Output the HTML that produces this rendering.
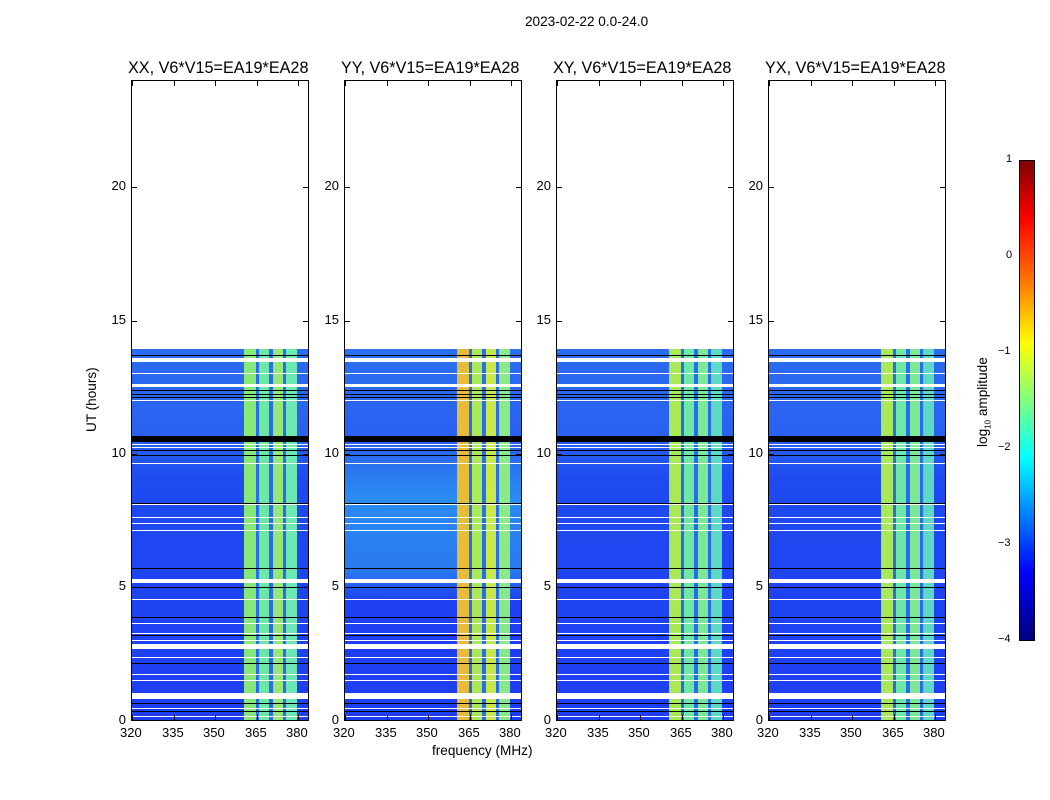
<!DOCTYPE html>
<html><head><style>
body{margin:0;width:1050px;height:800px;background:#fff;position:relative;overflow:hidden;font-family:"Liberation Sans",sans-serif;color:#000}
.t{position:absolute;white-space:nowrap}
.p{position:absolute;top:80px;width:176px;height:639px;border:1px solid #000;box-sizing:content-box;overflow:hidden}
.d{position:absolute;left:0;top:268px;width:176px;height:371px;background:#1e3ef2}
.s{position:absolute;left:0;width:176px}
.tick{position:absolute;background:#000}
.yl{position:absolute;font-size:13px;text-align:right;width:30px}
.xl{position:absolute;font-size:13px;top:725px}
.ti{position:absolute;font-size:16.2px;top:59px;white-space:nowrap}
</style></head><body>
<div class="t" style="left:525px;top:14px;font-size:13.6px">2023-02-22 0.0-24.0</div>
<div class="t" style="left:432px;top:743px;font-size:13.6px">frequency (MHz)</div>
<div class="t" style="left:84px;top:432px;font-size:13.6px;transform:rotate(-90deg);transform-origin:0 0">UT (hours)</div>
<div class="ti" style="left:128px">XX, V6*V15=EA19*EA28</div>
<div class="ti" style="left:341px">YY, V6*V15=EA19*EA28</div>
<div class="ti" style="left:553px">XY, V6*V15=EA19*EA28</div>
<div class="ti" style="left:765px">YX, V6*V15=EA19*EA28</div>
<div id="panels"></div>
<div style="position:absolute;left:1019px;top:160px;width:14px;height:479px;border:1px solid #000;background:linear-gradient(to bottom,#7f0000 0%,#ff0000 12%,#ff7f00 26%,#ffff00 38%,#7fff7f 50%,#00ffff 62%,#007fff 74%,#0000ff 86%,#00007f 100%)"></div>
<div class="t" style="left:1006px;top:153px;font-size:11px">1</div>
<div class="t" style="left:1006px;top:249px;font-size:11px">0</div>
<div class="t" style="left:998px;top:345px;font-size:11px">−1</div>
<div class="t" style="left:998px;top:441px;font-size:11px">−2</div>
<div class="t" style="left:998px;top:537px;font-size:11px">−3</div>
<div class="t" style="left:998px;top:633px;font-size:11px">−4</div>
<div class="t" style="left:975px;top:447px;font-size:13.6px;transform:rotate(-90deg);transform-origin:0 0">log<sub style="font-size:8px">10</sub> amplitude</div>
<script>
var lefts=[131,344,556,768];
var band=[
"linear-gradient(to right,#8cf070 0,#8cf070 12px,#2a6cf0 12px,#2a6cf0 15px,#70f0a0 15px,#70f0a0 25px,#2a6cf0 25px,#2a6cf0 29px,#9cf070 29px,#9cf070 39px,#2a6cf0 39px,#2a6cf0 42px,#70f0b0 42px,#70f0b0 53px)",
"linear-gradient(to right,#f0c030 0,#f0c030 12px,#2a6cf0 12px,#2a6cf0 15px,#b0f050 15px,#b0f050 25px,#2a6cf0 25px,#2a6cf0 29px,#d0f040 29px,#d0f040 39px,#2a6cf0 39px,#2a6cf0 42px,#90f080 42px,#90f080 53px)",
"linear-gradient(to right,#b0f050 0,#b0f050 12px,#2a6cf0 12px,#2a6cf0 15px,#70f0a0 15px,#70f0a0 25px,#2a6cf0 25px,#2a6cf0 29px,#80f090 29px,#80f090 39px,#2a6cf0 39px,#2a6cf0 42px,#60e0c0 42px,#60e0c0 53px)",
"linear-gradient(to right,#b0f050 0,#b0f050 12px,#2a6cf0 12px,#2a6cf0 15px,#70f0a0 15px,#70f0a0 25px,#2a6cf0 25px,#2a6cf0 29px,#80f090 29px,#80f090 39px,#2a6cf0 39px,#2a6cf0 42px,#60e0c0 42px,#60e0c0 53px)"];
var st=[[354,1,'#000'],[357,4,'#fff'],[372,1,'#fff'],[383,3,'#fff'],[389,1,'#000'],[393,1,'#000'],[396,1,'#000'],[399,1,'#fff'],[435,6,'#000'],[443,1,'#fff'],[446,1,'#fff'],[449,1,'#000'],[454,1,'#000'],[462,1,'#fff'],[502,1,'#000'],[503,1,'#fff'],[516,1,'#fff'],[522,1,'#fff'],[529,1,'#fff'],[567,1,'#000'],[578,4,'#fff'],[586,1,'#000'],[598,1,'#fff'],[616,1,'#000'],[622,1,'#fff'],[632,1,'#fff'],[634,1,'#000'],[639,1,'#fff'],[643,5,'#fff'],[656,1,'#fff'],[662,1,'#000'],[673,1,'#fff'],[679,1,'#fff'],[692,6,'#fff'],[702,1,'#000'],[707,1,'#fff'],[710,1,'#000'],[715,1,'#fff']];
var h='';
lefts.forEach(function(L,i){
 h+='<div class="p" style="left:'+L+'px;top:80px">';
 var bg=i==1?'linear-gradient(to bottom,#2a70f0 0,#2a60f0 25%,#2a8cf0 40%,#2a78f0 60%,#1e40f0 68%,#1e3ef2 100%)':'linear-gradient(to bottom,#2a6cf0 0,#2a60f0 25%,#1e4af0 35%,#1e3ef2 100%)';
 h+='<div class="d" style="background:'+bg+'"></div>';
 h+='<div class="d" style="left:112px;width:53px;background:'+band[i]+';opacity:.95"></div>';
 st.forEach(function(s){h+='<div class="s" style="top:'+(s[0]-80)+'px;height:'+s[1]+'px;background:'+s[2]+'"></div>';});
 [0,5,10,15,20].forEach(function(v){var y=639-v*26.63;h+='<div class="tick" style="left:0;top:'+y+'px;width:5px;height:1px"></div><div class="tick" style="right:0;top:'+y+'px;width:5px;height:1px"></div>';});
 [0,42,83,125,166].forEach(function(x){h+='<div class="tick" style="left:'+x+'px;bottom:0;width:1px;height:5px"></div><div class="tick" style="left:'+x+'px;top:0;width:1px;height:5px"></div>';});
 h+='</div>';
});
document.getElementById('panels').innerHTML=h;
</script>
<div class="yl" style="left:96px;top:712px">0</div><div class="yl" style="left:96px;top:578px">5</div><div class="yl" style="left:96px;top:445px">10</div><div class="yl" style="left:96px;top:312px">15</div><div class="yl" style="left:96px;top:178px">20</div>
<div class="yl" style="left:309px;top:712px">0</div><div class="yl" style="left:309px;top:578px">5</div><div class="yl" style="left:309px;top:445px">10</div><div class="yl" style="left:309px;top:312px">15</div><div class="yl" style="left:309px;top:178px">20</div>
<div class="yl" style="left:521px;top:712px">0</div><div class="yl" style="left:521px;top:578px">5</div><div class="yl" style="left:521px;top:445px">10</div><div class="yl" style="left:521px;top:312px">15</div><div class="yl" style="left:521px;top:178px">20</div>
<div class="yl" style="left:733px;top:712px">0</div><div class="yl" style="left:733px;top:578px">5</div><div class="yl" style="left:733px;top:445px">10</div><div class="yl" style="left:733px;top:312px">15</div><div class="yl" style="left:733px;top:178px">20</div>
<div class="xl" style="left:120px">320</div><div class="xl" style="left:162px">335</div><div class="xl" style="left:203px">350</div><div class="xl" style="left:245px">365</div><div class="xl" style="left:286px">380</div>
<div class="xl" style="left:333px">320</div><div class="xl" style="left:375px">335</div><div class="xl" style="left:416px">350</div><div class="xl" style="left:458px">365</div><div class="xl" style="left:499px">380</div>
<div class="xl" style="left:545px">320</div><div class="xl" style="left:587px">335</div><div class="xl" style="left:628px">350</div><div class="xl" style="left:670px">365</div><div class="xl" style="left:711px">380</div>
<div class="xl" style="left:757px">320</div><div class="xl" style="left:799px">335</div><div class="xl" style="left:840px">350</div><div class="xl" style="left:882px">365</div><div class="xl" style="left:923px">380</div>
</body></html>
